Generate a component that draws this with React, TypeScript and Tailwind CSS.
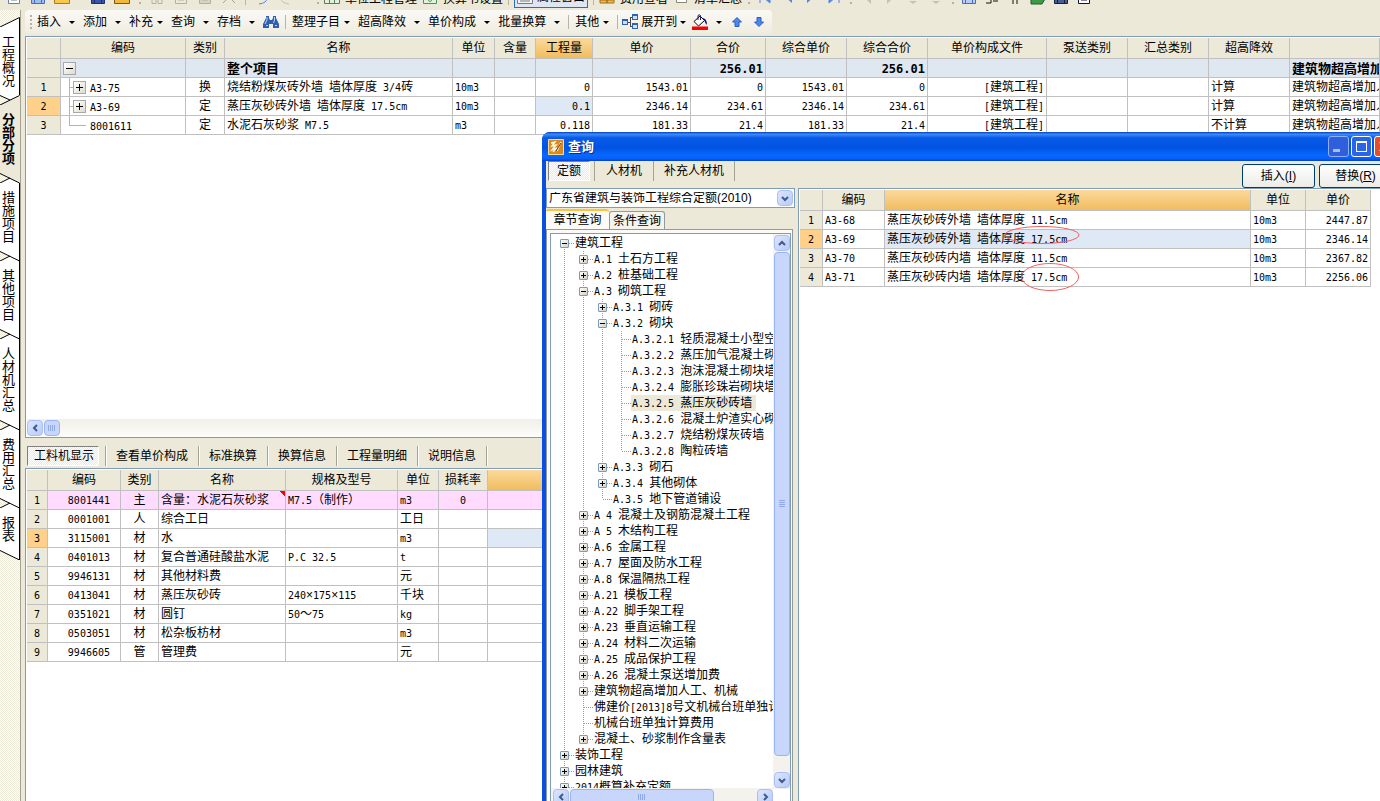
import type { ReactNode } from "react";
import { clsx } from "clsx";

const sideTabs = ["工程概况", "分部分项", "措施项目", "其他项目", "人材机汇总", "费用汇总", "报表"];

type ToolItem = { label: string; wide?: boolean };

const editTools: ToolItem[] = [
  { label: "插入", wide: true },
  { label: "添加", wide: true },
  { label: "补充" },
  { label: "查询", wide: true },
  { label: "存档", wide: true },
];

const priceTools: ToolItem[] = [
  { label: "整理子目" },
  { label: "超高降效", wide: true },
  { label: "单价构成", wide: true },
  { label: "批量换算", wide: true },
];

const mainHeads = [
  "", "编码", "类别", "名称", "单位", "含量", "工程量", "单价", "合价", "综合单价", "综合合价",
  "单价构成文件", "泵送类别", "汇总类别", "超高降效", "",
];

const overHeight = "建筑物超高增加人工、机械";

const mainRows = [
  { no: "1", code: "A3-75", kind: "换", name: "烧结粉煤灰砖外墙 墙体厚度 3/4砖", unit: "10m3", qty: "0", price: "1543.01", total: "0", full: "1543.01", fullTotal: "0", over: "计算" },
  { no: "2", code: "A3-69", kind: "定", name: "蒸压灰砂砖外墙 墙体厚度 17.5cm", unit: "10m3", qty: "0.1", price: "2346.14", total: "234.61", full: "2346.14", fullTotal: "234.61", over: "计算" },
  { no: "3", code: "8001611", kind: "定", name: "水泥石灰砂浆 M7.5", unit: "m3", qty: "0.118", price: "181.33", total: "21.4", full: "181.33", fullTotal: "21.4", over: "不计算" },
];

const detailTabs = ["工料机显示", "查看单价构成", "标准换算", "换算信息", "工程量明细", "说明信息"];

const detailRows = [
  ["8001441", "主", "含量：水泥石灰砂浆", "M7.5（制作）", "m3", "0"],
  ["0001001", "人", "综合工日", "", "工日", ""],
  ["3115001", "材", "水", "", "m3", ""],
  ["0401013", "材", "复合普通硅酸盐水泥", "P.C 32.5", "t", ""],
  ["9946131", "材", "其他材料费", "", "元", ""],
  ["0413041", "材", "蒸压灰砂砖", "240×175×115", "千块", ""],
  ["0351021", "材", "圆钉", "50～75", "kg", ""],
  ["0503051", "材", "松杂板枋材", "", "m3", ""],
  ["9946605", "管", "管理费", "", "元", ""],
];

type Node = { depth: number; label: string; box?: "+" | "-"; last?: boolean; first?: boolean };

const tree: Node[] = [
  { depth: 0, label: "建筑工程", box: "-", first: true },
  { depth: 1, label: "A.1 土石方工程", box: "+" },
  { depth: 1, label: "A.2 桩基础工程", box: "+" },
  { depth: 1, label: "A.3 砌筑工程", box: "-" },
  { depth: 2, label: "A.3.1 砌砖", box: "+" },
  { depth: 2, label: "A.3.2 砌块", box: "-" },
  { depth: 3, label: "A.3.2.1 轻质混凝土小型空心砌块墙" },
  { depth: 3, label: "A.3.2.2 蒸压加气混凝土砌块墙" },
  { depth: 3, label: "A.3.2.3 泡沫混凝土砌块墙" },
  { depth: 3, label: "A.3.2.4 膨胀珍珠岩砌块墙" },
  { depth: 3, label: "A.3.2.5 蒸压灰砂砖墙" },
  { depth: 3, label: "A.3.2.6 混凝土炉渣实心砌块墙" },
  { depth: 3, label: "A.3.2.7 烧结粉煤灰砖墙" },
  { depth: 3, label: "A.3.2.8 陶粒砖墙", last: true },
  { depth: 2, label: "A.3.3 砌石", box: "+" },
  { depth: 2, label: "A.3.4 其他砌体", box: "+" },
  { depth: 2, label: "A.3.5 地下管道铺设", last: true },
  { depth: 1, label: "A 4 混凝土及钢筋混凝土工程", box: "+" },
  { depth: 1, label: "A 5 木结构工程", box: "+" },
  { depth: 1, label: "A.6 金属工程", box: "+" },
  { depth: 1, label: "A.7 屋面及防水工程", box: "+" },
  { depth: 1, label: "A.8 保温隔热工程", box: "+" },
  { depth: 1, label: "A.21 模板工程", box: "+" },
  { depth: 1, label: "A.22 脚手架工程", box: "+" },
  { depth: 1, label: "A.23 垂直运输工程", box: "+" },
  { depth: 1, label: "A.24 材料二次运输", box: "+" },
  { depth: 1, label: "A.25 成品保护工程", box: "+" },
  { depth: 1, label: "A.26 混凝土泵送增加费", box: "+" },
  { depth: 1, label: "建筑物超高增加人工、机械", box: "+" },
  { depth: 1, label: "佛建价[2013]8号文机械台班单独计算" },
  { depth: 1, label: "机械台班单独计算费用" },
  { depth: 1, label: "混凝土、砂浆制作含量表", box: "+", last: true },
  { depth: 0, label: "装饰工程", box: "+" },
  { depth: 0, label: "园林建筑", box: "+" },
  { depth: 0, label: "2014概算补充定额", box: "+" },
];

const quotaRows = [
  ["A3-68", "蒸压灰砂砖外墙 墙体厚度 11.5cm", "10m3", "2447.87"],
  ["A3-69", "蒸压灰砂砖外墙 墙体厚度 17.5cm", "10m3", "2346.14"],
  ["A3-70", "蒸压灰砂砖内墙 墙体厚度 11.5cm", "10m3", "2367.82"],
  ["A3-71", "蒸压灰砂砖内墙 墙体厚度 17.5cm", "10m3", "2256.06"],
];

const hatch = "bg-[repeating-conic-gradient(#ffffff_0_25%,#ece9d8_0_50%)] bg-[length:2px_2px]";

export default function App() {
  return (
    <div className="relative flex h-screen flex-col overflow-hidden bg-[#ece9d8] font-['Liberation_Sans','Noto_Sans_CJK_SC',sans-serif] text-xs leading-none text-black">
      <TopStrip />
      <div className="flex min-h-0 flex-1">
        <SideTabs />
        <main className="flex min-w-0 flex-1 flex-col pl-1">
          <Toolbar />
          <section className="flex h-[402px] shrink-0 flex-col border border-r-0 border-[#7f9db9] bg-white pl-px pt-px">
            <MainTable />
            <div className="mt-auto flex h-[18px] items-center gap-px bg-gradient-to-b from-[#f0efe8] to-[#fdfdfb]">
              <ScrollButton dir="left" />
              <div className="flex h-4 w-4 items-center justify-center rounded-sm border border-[#9ab5f4] bg-[#c8d6fb]">
                <Ridges />
              </div>
            </div>
          </section>
          <nav className="flex h-[30px] shrink-0 items-end pb-0.5 pl-0.5">
            {detailTabs.map((tab, i) => (
              <div key={tab} className="flex h-5 items-center border-r border-[#a5a294] pr-1 shadow-[1px_0_0_#fff]">
                <button
                  className={clsx(
                    "h-5 whitespace-nowrap pl-1.5",
                    i === 0 ? `mr-0.5 border border-[#fff] border-l-[#808080] border-t-[#808080] pr-1 ${hatch}` : "ml-1 pr-1.5",
                  )}
                >
                  {tab}
                </button>
              </div>
            ))}
          </nav>
          <section className="min-h-0 flex-1 overflow-hidden border border-r-0 border-b-0 border-[#7f9db9] bg-white pl-px pt-px">
            <DetailTable />
          </section>
        </main>
      </div>
      <QueryDialog />
    </div>
  );
}

// Latin runs use a 6px wide monospaced face beside the 12px Chinese glyphs
function T({ children }: { children: string }) {
  return (
    <span className="whitespace-pre">
      {children.split(/([\x20-\x7e]+)/).map((part, i) =>
        i % 2 ? (
          <span key={i} className="font-['DejaVu_Sans_Mono',monospace] text-[10px] leading-none">
            {part}
          </span>
        ) : (
          part
        ),
      )}
    </span>
  );
}

function Th({ children, hot }: { children?: ReactNode; hot?: boolean }) {
  return (
    <th
      className={clsx(
        "h-[21px] overflow-hidden whitespace-nowrap border-b border-r border-[#c0c0c0] p-0 text-center font-normal",
        hot ? "bg-gradient-to-b from-[#fbd99c] to-[#f1bd5c]" : "bg-[#ece9d8]",
      )}
    >
      {children}
    </th>
  );
}

function Td({ text = "", align, className }: { text?: string; align?: "right" | "center"; className?: string }) {
  return (
    <td
      className={clsx(
        "h-[19px] overflow-hidden whitespace-nowrap border-b border-r border-[#c0c0c0] px-0.5 py-0",
        align === "right" && "text-right",
        align === "center" && "text-center",
        className,
      )}
    >
      <T>{text}</T>
    </td>
  );
}

function RowNo({ text, on }: { text: string; on?: boolean }) {
  return <Td text={text} align="center" className={on ? "bg-[#ffd08a]" : "bg-[#ece9d8]"} />;
}

function GridBox({ sign }: { sign: "+" | "-" }) {
  return (
    <button
      aria-label={sign === "+" ? "展开" : "折叠"}
      className="h-[13px] w-[13px] shrink-0 border border-[#a8a8a8] bg-gradient-to-br from-white to-[#dedccf]"
    >
      <svg viewBox="0 0 11 11" className="h-[11px] w-[11px]" shapeRendering="crispEdges">
        <path d={sign === "+" ? "M2 5.5h7M5.5 2v7" : "M2 5.5h7"} stroke="#000" fill="none" />
      </svg>
    </button>
  );
}

function MainTable() {
  return (
    <table className="w-full table-fixed border-separate border-spacing-0">
      <colgroup>
        <col className="w-[34px]" />
        <col className="w-[125px]" />
        <col className="w-[39px]" />
        <col className="w-[228px]" />
        <col className="w-[42px]" />
        <col className="w-[41px]" />
        <col className="w-[57px]" />
        <col className="w-[98px]" />
        <col className="w-[75px]" />
        <col className="w-[81px]" />
        <col className="w-[81px]" />
        <col className="w-[119px]" />
        <col className="w-[81px]" />
        <col className="w-[81px]" />
        <col className="w-[81px]" />
        <col />
      </colgroup>
      <thead>
        <tr>
          {mainHeads.map((head, i) => (
            <Th key={i} hot={head === "工程量"}>
              {head}
            </Th>
          ))}
        </tr>
      </thead>
      <tbody>
        <tr className="bg-[#dfe7f1] text-[13px] font-bold">
          <RowNo text="" />
          <td className="h-[19px] border-b border-r border-[#c0c0c0] p-0 pl-0.5">
            <div className="flex">
              <GridBox sign="-" />
            </div>
          </td>
          <Td />
          <Td text="整个项目" />
          <Td />
          <Td />
          <Td />
          <Td />
          <Td text="256.01" align="right" className="[&_span_span]:text-xs" />
          <Td />
          <Td text="256.01" align="right" className="[&_span_span]:text-xs" />
          <Td />
          <Td />
          <Td />
          <Td />
          <Td text={overHeight} />
        </tr>
        {mainRows.map((row, i) => (
          <tr key={row.no}>
            <RowNo text={row.no} on={i === 1} />
            <td className="h-[19px] border-b border-r border-[#c0c0c0] p-0">
              <div className="flex h-[18px] items-center">
                {i < 2 ? (
                  <>
                    <svg viewBox="0 0 12 18" className="h-[18px] w-3 shrink-0" shapeRendering="crispEdges">
                      <path d="M8.5 0v18M8 9.5h4" stroke="#b4b4b4" fill="none" />
                    </svg>
                    <GridBox sign="+" />
                  </>
                ) : (
                  <svg viewBox="0 0 25 18" className="h-[18px] w-[25px] shrink-0" shapeRendering="crispEdges">
                    <path d="M8.5 0v9.5h16" stroke="#b4b4b4" fill="none" />
                  </svg>
                )}
                <span className="pl-1 pt-0.5">
                  <T>{row.code}</T>
                </span>
              </div>
            </td>
            <Td text={row.kind} align="center" />
            <Td text={row.name} />
            <Td text={row.unit} />
            <Td />
            <Td text={row.qty} align="right" className={i === 1 ? "bg-[#dfe9f5]" : ""} />
            <Td text={row.price} align="right" />
            <Td text={row.total} align="right" />
            <Td text={row.full} align="right" />
            <Td text={row.fullTotal} align="right" />
            <Td text="[建筑工程]" align="right" />
            <Td />
            <Td />
            <Td text={row.over} />
            <Td text={overHeight} />
          </tr>
        ))}
      </tbody>
    </table>
  );
}

function DetailTable() {
  return (
    <table className="w-full table-fixed border-separate border-spacing-0">
      <colgroup>
        <col className="w-[21px]" />
        <col className="w-[73px]" />
        <col className="w-[38px]" />
        <col className="w-[127px]" />
        <col className="w-[112px]" />
        <col className="w-[41px]" />
        <col className="w-[49px]" />
        <col />
      </colgroup>
      <thead>
        <tr>
          {["", "编码", "类别", "名称", "规格及型号", "单位", "损耗率", ""].map((head, i) => (
            <Th key={i} hot={i === 7}>
              {head}
            </Th>
          ))}
        </tr>
      </thead>
      <tbody>
        {detailRows.map(([code, kind, name, spec, unit, loss], i) => (
          <tr key={code} className={i === 0 ? "bg-[#ffdcff]" : ""}>
            <RowNo text={String(i + 1)} on={i === 2} />
            <Td text={code} align="right" className="pr-2.5" />
            <Td text={kind} align="center" />
            <Td
              text={name}
              className={i === 0 ? "bg-[linear-gradient(225deg,#ff0000_4px,transparent_4px)]" : ""}
            />
            <Td text={spec} />
            <Td text={unit} />
            <Td text={loss} align="center" />
            <Td className={i === 2 ? "bg-[#dfe9f5]" : ""} />
          </tr>
        ))}
      </tbody>
    </table>
  );
}

function SideTabs() {
  return (
    <nav className={`flex w-[21px] shrink-0 flex-col border-r border-[#a5a294] pt-[7px] ${hatch}`}>
      <svg viewBox="0 0 20 10" className="h-2.5 w-5 shrink-0">
        <path d="M0 10L19.5 0V10z" fill="#fff" />
        <path d="M0 10L19.5 .5V10" stroke="#000" fill="none" />
      </svg>
      {sideTabs.map((tab, i) => (
        <div key={tab}>
          <button
            className={clsx(
              "flex w-5 flex-col items-start py-2 pl-0.5 text-[13px] leading-[13px]",
              i === 1 ? "bg-[#ece9d8] font-bold" : "border-r border-black bg-white",
            )}
          >
            {tab.split("").map((ch, k) => (
              <span key={k}>{ch}</span>
            ))}
          </button>
          <TabEdge index={i} />
        </div>
      ))}
    </nav>
  );
}

function TabEdge({ index }: { index: number }) {
  const upper = index === 1 ? "#ece9d8" : "#fff";
  if (index === sideTabs.length - 1) {
    return (
      <svg viewBox="0 0 20 10" className="h-2.5 w-5">
        <path d="M0 0H19.5V10z" fill="#fff" />
        <path d="M0 .5L19.5 10V0" stroke="#000" fill="none" />
      </svg>
    );
  }
  if (index === 0) {
    return (
      <svg viewBox="0 0 20 10" className="h-2.5 w-5">
        <path d="M0 0H20L9 5z" fill="#fff" />
        <path d="M0 10L20 0V10z" fill="#ece9d8" />
        <path d="M0 .5L10 5M0 10L19.5 .5" stroke="#000" fill="none" />
      </svg>
    );
  }
  return (
    <svg viewBox="0 0 20 10" className="h-2.5 w-5">
      <path d="M0 10L10 5L19.5 10z" fill="#fff" />
      <path d="M0 0H20V10z" fill={upper} />
      <path d="M0 .5L19.5 10M0 10L10 5" stroke="#000" fill="none" />
      {index > 1 && <path d="M19.5 0V10" stroke="#000" />}
    </svg>
  );
}

function Grip() {
  return (
    <svg viewBox="0 0 3 16" className="h-4 w-[3px] shrink-0" shapeRendering="crispEdges">
      <path d="M1.5 1v14" stroke="#b5b2a2" strokeWidth="2" strokeDasharray="2 2" />
    </svg>
  );
}

function Divider() {
  return <span className="h-3.5 w-px shrink-0 bg-[#b8b5a6]" />;
}

function DropArrow() {
  return (
    <svg viewBox="0 0 6 3" className="h-[3px] w-1.5 shrink-0">
      <path d="M0 0h6L3 3z" fill="#000" />
    </svg>
  );
}

function ToolButton({ label, wide }: ToolItem) {
  return (
    <button className={clsx("mr-2 flex shrink-0 items-center whitespace-nowrap", wide ? "gap-2" : "gap-1")}>
      {label}
      <DropArrow />
    </button>
  );
}

function Toolbar() {
  return (
    <div className="flex h-[26px] shrink-0 pb-0.5">
      <div className="flex items-center rounded-sm bg-gradient-to-b from-[#faf9f5] to-[#efecdf] pl-1 pr-2">
        <Grip />
        <div className="flex items-center pl-[5px]">
          {editTools.map((item) => (
            <ToolButton key={item.label} {...item} />
          ))}
        </div>
        <button aria-label="查找" className="mr-1.5">
          <svg viewBox="0 0 16 14" className="h-3.5 w-4">
            <path d="M3 1h3v2l1 2h2l1-2V1h3v2l3 6v4h-6V9H6v4H0V9l3-6z" fill="#2f5fae" />
            <path d="M4 2v3L2 9M11.500 2v3l-1 3M3 10.500h2M12 10.500h2" stroke="#b9d3f6" fill="none" />
          </svg>
        </button>
        <Divider />
        <div className="flex items-center pl-1.5">
          {priceTools.map((item) => (
            <ToolButton key={item.label} {...item} />
          ))}
        </div>
        <Divider />
        <div className="flex items-center pl-1.5">
          <ToolButton label="其他" />
        </div>
        <Divider />
        <button className="ml-1 flex items-center gap-[3px] whitespace-nowrap">
          <svg viewBox="0 0 16 16" className="h-4 w-4" shapeRendering="crispEdges">
            <path d="M5 8h3M8.500 3.500v9M8 3.500h2M8 12.500h2" stroke="#4a4a4a" fill="none" />
            <path d="M.5 5.500h5v5h-5zM10.500.5h5v5h-5zM10.500 9.500h5v5h-5z" fill="#cfe0fb" stroke="#2f62b5" />
            <path d="M0 6h6M10 1.500h6M10 10.500h6" stroke="#2f62b5" />
          </svg>
          展开到
          <DropArrow />
        </button>
        <button aria-label="填充颜色" className="ml-1.5 flex items-center gap-2">
          <svg viewBox="0 0 16 16" className="h-4 w-4">
            <path d="M2 7.500L8 2l4.500 4.500L6.500 12z" fill="#fff" stroke="#000" />
            <path d="M6 6V1.500Q7 0 8.500 1.500V6" fill="none" stroke="#1a1a6e" />
            <path d="M10 4q5 0 5 7-2-1-2.500-4.500z" fill="#10107a" />
            <path d="M0 12.500h16V16H0z" fill="#f00" />
          </svg>
          <DropArrow />
        </button>
        <button aria-label="上移" className="ml-2.5">
          <svg viewBox="0 0 10 10" className="h-2.5 w-2.5">
            <path d="M5 .5L9.500 5H7v4.500H3V5H.5z" fill="#4f86ea" stroke="#2a5cc4" />
          </svg>
        </button>
        <button aria-label="下移" className="ml-3">
          <svg viewBox="0 0 10 10" className="h-2.5 w-2.5">
            <path d="M5 9.500L9.500 5H7V.5H3V5H.5z" fill="#4f86ea" stroke="#2a5cc4" />
          </svg>
        </button>
      </div>
    </div>
  );
}

function Glyph({ d, fill = "none", stroke = "none" }: { d: string; fill?: string; stroke?: string }) {
  return (
    <svg viewBox="0 0 16 16" className="h-4 w-4 shrink-0">
      <path d={d} fill={fill} stroke={stroke} />
    </svg>
  );
}

const sheet = "M2.500 1.500h11v13h-11zM5 5h6M5 8h6M5 11h6";
const folder = "M.5 3.500h6l2 2h7v9H.5z";
const disk = "M1.500 1.500h13v13h-13zM4.500 14V9h7v5";

// Standard toolbar, scrolled so that only its lower edge shows
function TopStrip() {
  return (
    <div className="flex h-2.5 shrink-0 overflow-hidden whitespace-nowrap pl-1.5">
      <div className="flex items-end gap-2 pb-[5px] pr-3">
        <Glyph d={sheet} fill="#fff" stroke="#6780a8" />
        <Glyph d={disk} fill="#9dbcf0" stroke="#4a6fb5" />
        <Glyph d={folder} fill="#f7c84b" stroke="#b07b17" />
        <span className="w-1" />
        <Glyph d={disk} fill="#3a55a8" stroke="#1d2d70" />
        <Glyph d={folder} fill="#f0b93e" stroke="#7d5710" />
        <Grip />
        <Glyph d="M4 1l6 9M12 1l-6 9M3 14.500h4v-4H3zM9 14.500h4v-4H9z" stroke="#b3b0a4" />
        <Glyph d={sheet} stroke="#b3b0a4" />
        <Glyph d={sheet} fill="#d6d3c6" stroke="#b3b0a4" />
        <Glyph d="M2 2l12 12M14 2L2 14" stroke="#a5a296" />
        <Divider />
        <Glyph d="M3 4q10 0 10 5t-8 6" stroke="#4f86ea" />
        <Glyph d="M13 4q-10 0-10 5t8 6" stroke="#c5c2b5" />
      </div>
      <div className="flex items-end gap-[5px] pb-[5px] pl-2.5">
        <Grip />
        <Glyph d="M.5 1.500h15v13H.5zM.5 6h15M.5 10h15M5.500 2v12M10.500 2v12" fill="#e4f0dc" stroke="#5d7a5d" />
        <button>单位工程管理</button>
        <Glyph d="M1.500 1.500h13v13h-13zM5 9q3 7 6 0" fill="#dff3df" stroke="#4f8f5f" />
        <button>换算书设置</button>
        <Divider />
        <button className="-mb-[3px] flex items-center gap-1 border border-[#316ac5] bg-[#dfe6f3] px-0.5 pb-0.5">
          <Glyph d="M.5 3.500h15v11H.5zM3 12h10" fill="#f4f4f4" stroke="#7a7a7a" />
          属性窗口
        </button>
        <Divider />
        <Glyph d="M1 8h7v6H1zM8 5h7v9H8zM1 11h14" fill="#efb94a" stroke="#a06f1a" />
        <button>费用查看</button>
        <Glyph d="M3.500 3.500h10v10h-10z" fill="#fff" stroke="#8a887c" />
        <button>清单汇总</button>
      </div>
      <div className="flex items-end gap-[7px] pb-[5px] pl-[5px]">
        <Grip />
        <Glyph d="M3 2v12M13 2L6 8l7 6z" fill="#4f86ea" stroke="#4f86ea" />
        <Glyph d="M12 2L5 8l7 6z" fill="#4f86ea" />
        <Glyph d="M4 2l7 6-7 6z" fill="#4f86ea" />
        <Glyph d="M3 2l7 6-7 6zM13 2v12" fill="#4f86ea" stroke="#4f86ea" />
        <Grip />
        <Glyph d="M12 5l-5 5 5 5z" fill="#c5c2b5" />
        <Glyph d="M5 5l5 5-5 5z" fill="#c5c2b5" />
        <Glyph d="M4 12h8l-4 3z" fill="#c5c2b5" />
        <Glyph d="M4 12h8l-4 3z" fill="#c5c2b5" />
        <Grip />
        <Glyph d={disk} fill="#b9cdf2" stroke="#4a6fb5" />
        <Glyph d="M2 14h5V8M9 12h5" stroke="#111" />
        <Glyph d="M6 2v13M10 2v13" stroke="#111" />
        <Glyph d="M1 6h11l3 4-3 5H1z" fill="#3f9a48" stroke="#1f5a28" />
        <Glyph d={disk} fill="#4a5f8f" stroke="#15203d" />
        <Glyph d={sheet} fill="#fff" stroke="#10104a" />
      </div>
    </div>
  );
}

function Ridges() {
  return (
    <svg viewBox="0 0 8 6" className="h-1.5 w-2" shapeRendering="crispEdges">
      <path d="M.5 0v6M2.500 0v6M4.500 0v6M6.500 0v6" stroke="#8ea8e8" />
    </svg>
  );
}

const chevrons = {
  left: "M7 2L4 5l3 3",
  right: "M4 2l3 3-3 3",
  up: "M2 7l3-3 3 3",
  down: "M2 4l3 3 3-3",
};

function ScrollButton({ dir }: { dir: keyof typeof chevrons }) {
  return (
    <button
      aria-label={`滚动 ${dir}`}
      className="flex h-4 w-4 shrink-0 items-center justify-center rounded-sm border border-[#a9bff5] bg-gradient-to-br from-[#dbe5fe] to-[#b9cbf8]"
    >
      <svg viewBox="0 0 10 10" className="h-2.5 w-2.5">
        <path d={chevrons[dir]} fill="none" stroke="#3f5a8c" strokeWidth="2" />
      </svg>
    </button>
  );
}

function TreeCell({ node }: { node: Node }) {
  const up = node.first ? 8 : 0;
  const down = node.last ? 8 : 16;
  return (
    <span className="relative h-4 w-[19px] shrink-0">
      <svg viewBox="0 0 19 16" className="h-4 w-[19px]" shapeRendering="crispEdges">
        <path d={`M9.500 ${up}V${down}M10 8.500H19`} stroke="#a09d90" strokeDasharray="1 1" fill="none" />
      </svg>
      {node.box && (
        <button
          aria-label={node.box === "+" ? "展开" : "折叠"}
          className="absolute left-[5px] top-1 h-[9px] w-[9px] rounded-[1px] border border-[#7b9ab8] bg-gradient-to-br from-white to-[#d5d0c2]"
        >
          <svg viewBox="0 0 7 7" className="h-[7px] w-[7px]" shapeRendering="crispEdges">
            <path d={node.box === "+" ? "M1 3.500h5M3.500 1v5" : "M1 3.500h5"} stroke="#000" />
          </svg>
        </button>
      )}
    </span>
  );
}

function ChapterTree() {
  return (
    <ul className="min-h-0 flex-1 overflow-hidden pl-1 pt-px">
      {tree.map((node) => (
        <li key={node.label} className="flex h-4">
          {Array.from({ length: node.depth }, (_, k) => (
            <svg key={k} viewBox="0 0 19 16" className="h-4 w-[19px] shrink-0" shapeRendering="crispEdges">
              <path d="M9.500 0v16" stroke="#a09d90" strokeDasharray="1 1" />
            </svg>
          ))}
          <TreeCell node={node} />
          <span
            className={clsx(
              "flex h-4 shrink-0 items-center pl-px pr-1",
              node.label.startsWith("A.3.2.5") && "bg-[#ece9d8]",
            )}
          >
            <T>{node.label}</T>
          </span>
        </li>
      ))}
    </ul>
  );
}

function DialogButton({ children }: { children: ReactNode }) {
  return (
    <button className="h-6 w-[73px] rounded-[3px] border border-[#003c74] bg-gradient-to-b from-white to-[#ecebe6] whitespace-nowrap">
      {children}
    </button>
  );
}

function QueryDialog() {
  return (
    <section
      aria-label="查询"
      className="absolute -bottom-8 -right-5 left-[542px] top-[132px] flex flex-col overflow-hidden rounded-t-lg bg-[#0a4fe0]"
    >
      <header className="flex h-[29px] shrink-0 items-center bg-[linear-gradient(#0a3fc4,#3a8cf8_8%,#0a5ae8_20%,#0054e3_55%,#0868ff_80%,#0660f8_92%,#0340c8)] pl-1.5 pr-[5px]">
        <svg viewBox="0 0 16 16" className="h-4 w-4">
          <path d="M.5.5h15v15H.5z" fill="#d98a1c" stroke="#f6dc9a" />
          <path d="M3 4l4-1-3 4 4-1-4 5 5-2-4 4M9 12l4-9" fill="none" stroke="#fff6d8" strokeWidth="1.500" />
          <path d="M8 12l5-8" stroke="#7a2a08" />
        </svg>
        <h1 className="pl-1 text-[13px] font-bold text-white [text-shadow:1px_1px_0_#0b2f8a]">查询</h1>
        <div className="ml-auto flex gap-0.5">
          <button aria-label="最小化" className="h-[21px] w-[21px] rounded-[3px] border border-[#8fb0f4] bg-[#2f5fdc]">
            <svg viewBox="0 0 19 19" className="h-[19px] w-[19px]">
              <path d="M4 12h7v3H4z" fill="#a9bff0" />
            </svg>
          </button>
          <button aria-label="最大化" className="h-[21px] w-[21px] rounded-[3px] border border-white bg-[#2a64e8]">
            <svg viewBox="0 0 19 19" className="h-[19px] w-[19px]" shapeRendering="crispEdges">
              <path d="M4.500 4.500h10v10h-10zM4 5.500h11" fill="none" stroke="#fff" />
            </svg>
          </button>
          <button aria-label="关闭" className="h-[21px] w-[21px] rounded-[3px] border border-white bg-[#e0502c]">
            <svg viewBox="0 0 19 19" className="h-[19px] w-[19px]">
              <path d="M5 5l9 9M14 5l-9 9" stroke="#fff" strokeWidth="2" />
            </svg>
          </button>
        </div>
      </header>
      <div className="mx-1 flex min-h-0 flex-1 flex-col bg-[#ece9d8]">
        <div className="flex h-[27px] shrink-0 pl-0.5">
          <button className={`mr-1 h-5 w-[42px] border border-white border-l-[#808080] border-t-[#808080] ${hatch}`}>
            定额
          </button>
          <button className="h-5 border-x border-[#a5a294] px-[11px]">人材机</button>
          <button className="h-5 border-r border-[#a5a294] px-2.5">补充人材机</button>
          <div className="ml-auto flex gap-1 pr-1 pt-[3px]">
            <DialogButton>
              插入(<u>I</u>)
            </DialogButton>
            <DialogButton>
              替换(<u>R</u>)
            </DialogButton>
          </div>
        </div>
        <div className="flex min-h-0 flex-1">
          <aside className="flex w-[250px] shrink-0 flex-col pr-px">
            <div className="relative h-5 shrink-0">
              <select
                aria-label="定额库"
                className="h-5 w-full appearance-none border border-[#7f9db9] bg-white pl-0.5 text-xs leading-none"
              >
                <option>广东省建筑与装饰工程综合定额(2010)</option>
              </select>
              <span className="pointer-events-none absolute right-0.5 top-0.5">
                <ScrollButton dir="down" />
              </span>
            </div>
            <div className="flex h-[21px] shrink-0 items-end pt-px">
              <button className="h-5 w-[63px] rounded-t-[3px] border-t-2 border-[#ffc23c] bg-[#fbfaf7]">章节查询</button>
              <button className="h-[18px] w-14 rounded-t-[3px] border border-b-0 border-[#919b9c] bg-[#f4f3ee] whitespace-nowrap">
                条件查询
              </button>
            </div>
            <div className="mr-0.5 flex min-h-0 flex-1 border border-[#919b9c] bg-[#fbfaf7] p-[3px] pr-px">
              <div className="flex min-h-0 min-w-0 flex-1 border border-[#7f9db9] bg-white">
                <div className="flex min-w-0 flex-1 flex-col pb-[22px]">
                  <ChapterTree />
                  <div className="flex h-[18px] shrink-0 items-center gap-px bg-[#f3f2ec] pl-0.5">
                    <ScrollButton dir="left" />
                    <div className="flex h-4 w-36 items-center justify-center rounded-sm border border-[#9ab5f4] bg-[#c8d6fb]">
                      <Ridges />
                    </div>
                    <span className="ml-auto">
                      <ScrollButton dir="right" />
                    </span>
                  </div>
                </div>
                <div className="mb-[39px] flex w-[17px] shrink-0 flex-col items-center gap-px bg-[#f3f2ec] py-px">
                  <ScrollButton dir="up" />
                  <div className="flex h-[504px] w-4 items-center justify-center rounded-sm border border-[#9ab5f4] bg-[#c8d6fb]">
                    <span className="rotate-90">
                      <Ridges />
                    </span>
                  </div>
                  <span className="mt-auto">
                    <ScrollButton dir="down" />
                  </span>
                </div>
              </div>
            </div>
          </aside>
          <div className="relative ml-0.5 min-w-0 flex-1 border border-[#7f9db9] bg-white pl-px pt-px">
            <table className="w-[571px] table-fixed border-separate border-spacing-0">
              <colgroup>
                <col className="w-[23px]" />
                <col className="w-[62px]" />
                <col className="w-[366px]" />
                <col className="w-[55px]" />
                <col className="w-[65px]" />
              </colgroup>
              <thead>
                <tr>
                  {["", "编码", "名称", "单位", "单价"].map((head, i) => (
                    <Th key={i} hot={i === 2}>
                      {head}
                    </Th>
                  ))}
                </tr>
              </thead>
              <tbody>
                {quotaRows.map(([code, name, unit, price], i) => (
                  <tr key={code}>
                    <RowNo text={String(i + 1)} on={i === 1} />
                    <Td text={code} />
                    <Td text={name} className={i === 1 ? "bg-[#dfe9f5]" : ""} />
                    <Td text={unit} />
                    <Td text={price} align="right" />
                  </tr>
                ))}
              </tbody>
            </table>
            {/* hand-drawn marks around the wall thickness */}
            <svg viewBox="0 0 80 70" className="pointer-events-none absolute left-[203px] top-[34px] h-[70px] w-20">
              <ellipse cx="40" cy="12" rx="37" ry="8.500" fill="none" stroke="#f06060" />
              <ellipse cx="48" cy="54" rx="28.500" ry="13.500" fill="none" stroke="#f06060" />
            </svg>
          </div>
        </div>
      </div>
    </section>
  );
}
